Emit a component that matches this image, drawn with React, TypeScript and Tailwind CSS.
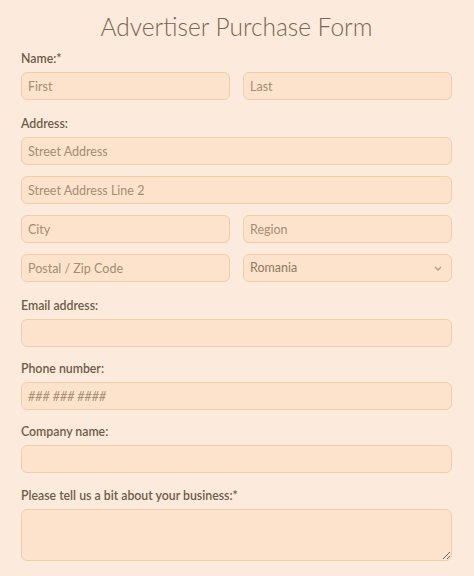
import React from "react";

const inputCls =
  "h-[28px] w-full rounded-[6px] border border-[#efcfa9] bg-[#fde3cc] px-[6px] text-[12.5px] text-[#6b5a45] placeholder:text-[#a48d73] outline-none";

function Label({ children }: { children: React.ReactNode }) {
  return (
    <div className="h-[14px] text-[12.3px] font-semibold leading-[14px] text-[#6e5c47] mb-[6px]">
      {children}
    </div>
  );
}

export default function App() {
  return (
    <div
      className="w-[474px] h-[576px] bg-[#fcebdc] px-[21px] pr-[22px] overflow-hidden"
      style={{ fontFamily: "Lato, 'Open Sans', sans-serif" }}
    >
      <h1 className="pt-[12px] h-[52px] text-center text-[24.5px] leading-[30px] font-light text-[#7b6650]">
        Advertiser Purchase Form
      </h1>

      <Label>Name:*</Label>
      <div className="grid grid-cols-2 gap-[13px]">
        <input className={inputCls} placeholder="First" />
        <input className={inputCls} placeholder="Last" />
      </div>

      <div className="mt-[17px]">
        <Label>Address:</Label>
        <div className="flex flex-col gap-[11px]">
          <input className={inputCls} placeholder="Street Address" />
          <input className={inputCls} placeholder="Street Address Line 2" />
          <div className="grid grid-cols-2 gap-[13px]">
            <input className={inputCls} placeholder="City" />
            <input className={inputCls} placeholder="Region" />
          </div>
          <div className="grid grid-cols-2 gap-[13px]">
            <input className={inputCls} placeholder="Postal / Zip Code" />
            <div className={inputCls + " flex items-center justify-between text-[#8e7a63]"}>
              <span>Romania</span>
              <svg width="8" height="5" viewBox="0 0 8 5" className="mr-[3px]">
                <path d="M1 1 L4 4 L7 1" fill="none" stroke="#b29b82" strokeWidth="1.3" />
              </svg>
            </div>
          </div>
        </div>
      </div>

      <div className="mt-[17px]">
        <Label>Email address:</Label>
        <input className={inputCls} />
      </div>

      <div className="mt-[15px]">
        <Label>Phone number:</Label>
        <input className={inputCls + " italic"} placeholder="### ### ####" />
      </div>

      <div className="mt-[15px]">
        <Label>Company name:</Label>
        <input className={inputCls + " bg-[#fbd9bd]"} />
      </div>

      <div className="mt-[16px]">
        <Label>Please tell us a bit about your business:*</Label>
        <textarea className="h-[52px] w-full rounded-[6px] border border-[#efcfa9] bg-[#fde3cc] outline-none block" />
      </div>
    </div>
  );
}
